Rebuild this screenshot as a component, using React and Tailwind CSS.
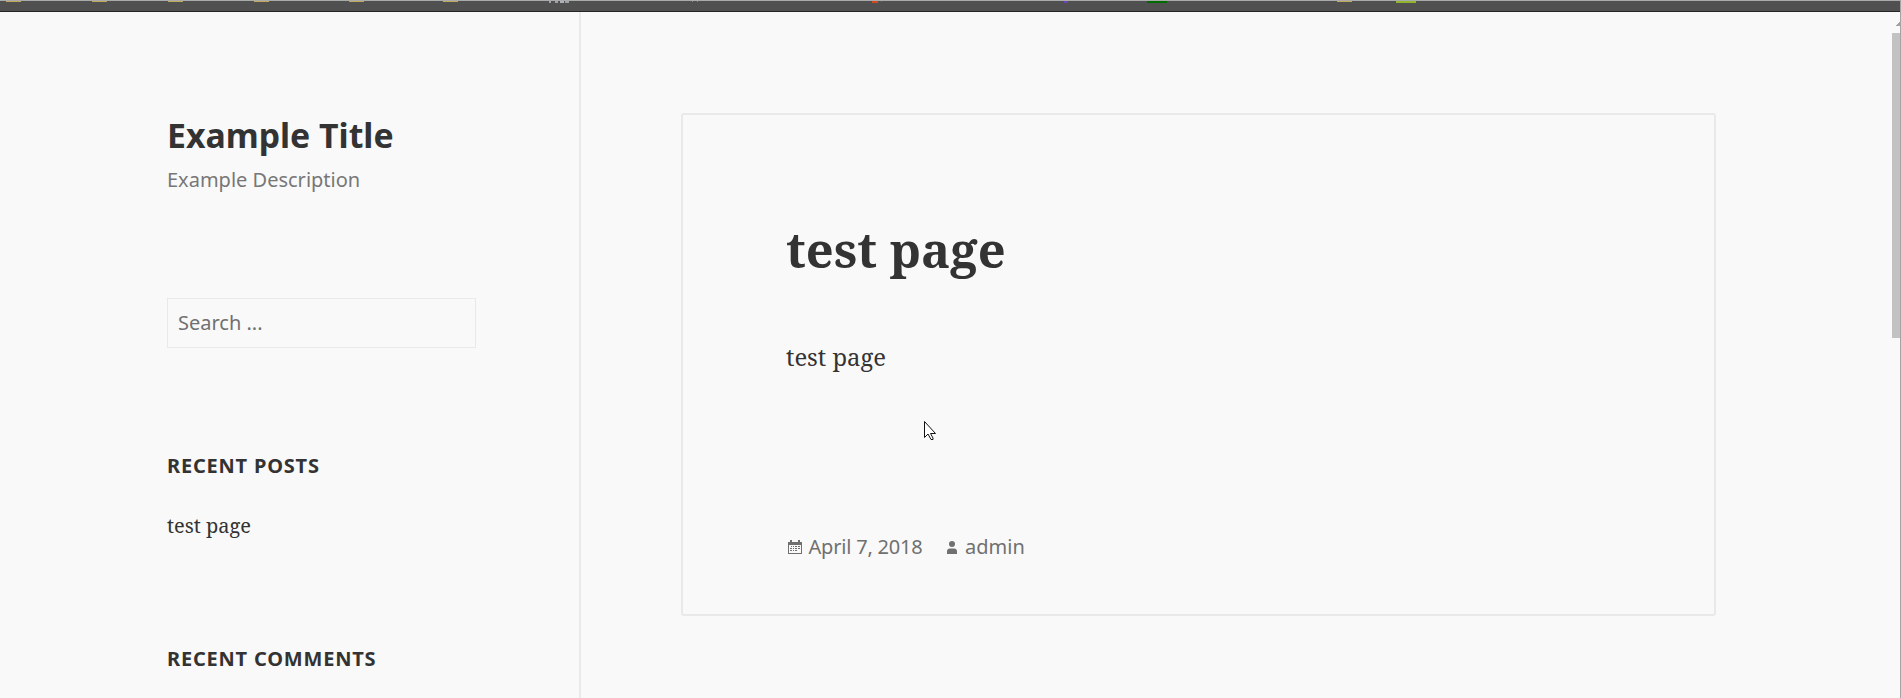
const marks = [
  'left-[6px] w-[15px] h-px bg-[#c2a95a]',
  'left-[92px] w-[15px] h-px bg-[#c2a95a]',
  'left-[168px] w-[15px] h-px bg-[#c2a95a]',
  'left-[254px] w-[15px] h-px bg-[#c2a95a]',
  'left-[349px] w-[15px] h-px bg-[#c2a95a]',
  'left-[443px] w-[15px] h-px bg-[#c2a95a]',
  'left-[549px] w-[2px] h-[2px] bg-[#a0a0a8]',
  'left-[555px] w-[3px] h-[2px] bg-[#a0a0a8]',
  'left-[560px] w-[4px] h-[2px] bg-[#b0b0b8]',
  'left-[565px] w-[4px] h-[2px] bg-[#a0a0a8]',
  'left-[692px] w-px h-px bg-[#8a8a8a]',
  'left-[697px] w-px h-px bg-[#8a8a8a]',
  'left-[872px] w-[6px] h-[2px] bg-[#cf4a1c]',
  'left-[881px] w-[1px] h-px bg-[#a05030]',
  'left-[1064px] w-[4px] h-[2px] bg-[#6a45b0]',
  'left-[1147px] w-[20px] h-[2px] bg-[#006a00]',
  'left-[1337px] w-[15px] h-px bg-[#c2a95a]',
  'left-[1396px] w-[20px] h-[2px] bg-[#93b52c]',
];

function BrowserStrip() {
  return (
    <div className="relative h-3 shrink-0 border-t border-b border-t-[#a9abaa] border-b-[#252525] bg-[#505050]">
      {marks.map((m) => (
        <span key={m} className={`absolute top-0 ${m}`} />
      ))}
    </div>
  );
}

function Sidebar() {
  return (
    <aside className="w-[581px] shrink-0 border-r-2 border-[#e9e9e9] pl-[167px] pr-[103px] pt-[101px]">
      <h1 className="h-[45px] whitespace-nowrap text-[33.8px] font-bold leading-[45px] text-[#333]">Example Title</h1>
      <p className="mt-[8px] h-[28px] text-[20px] leading-[28px] text-[#777]">Example Description</p>
      <div role="search" className="mt-[104px] flex h-[50px] items-center border border-[#e9e9e9] pl-[10px] text-[20px] text-[#707070]">
        Search ...
      </div>
      <h2 className="mt-[104px] h-[28px] whitespace-nowrap text-[20px] font-bold uppercase leading-[28px] tracking-[0.04em] text-[#333]">
        Recent Posts
      </h2>
      <a className="mt-[30px] block h-[32px] font-['Noto_Serif','Droid_Serif',serif] text-[20px] leading-[32px] text-[#333]">test page</a>
      <h2 className="mt-[103px] h-[28px] whitespace-nowrap text-[20px] font-bold uppercase leading-[28px] tracking-[0.04em] text-[#333]">
        Recent Comments
      </h2>
    </aside>
  );
}

function Article() {
  return (
    <article className="mt-[101px] ml-[100px] h-[503px] w-[1035px] rounded-[3px] border-2 border-[#e9e9e9] pl-[103px] pt-[102px]">
      <h1 className="h-[64px] font-['Noto_Serif','Droid_Serif',serif] text-[48.8px] font-bold leading-[64px] text-[#333]">test page</h1>
      <p className="mt-[57px] h-[38px] font-['Noto_Serif','Droid_Serif',serif] text-[23.8px] leading-[38px] text-[#333]">test page</p>
      <footer className="mt-[157px] flex h-[28px] items-center text-[20px] leading-[28px] text-[#707070]">
        <svg className="mr-[5.5px] ml-px" width="16" height="14" viewBox="0 0 16 14" fill="#707070" shapeRendering="crispEdges">
          <path d="M1 2H15V14H1ZM2 5V13H14V5Z" fillRule="evenodd" />
          <path d="M3 0h2v3H3zM11 0h2v3h-2z" />
          <path d="M4 6h1v1H4zM6 6h1v1H6zM8 6h2v1H8zM11 6h2v1h-2zM3 8h2v1H3zM6 8h1v1H6zM8 8h2v1H8zM11 8h2v1h-2zM3 10h2v1H3zM6 10h1v1H6zM8 10h2v1H8z" />
        </svg>
        <span className="tracking-[-0.01em]">April 7, 2018</span>
        <svg className="ml-[23.500px] mr-[7px]" width="12" height="13" viewBox="0 0 12 13" fill="#707070">
          <circle cx="6" cy="3" r="3" />
          <path d="M1 13V10.5Q1 7.5 4 7.5H8Q11 7.5 11 10.5V13Z" />
        </svg>
        <span>admin</span>
      </footer>
    </article>
  );
}

export default function App() {
  return (
    <div className="relative flex h-[698px] w-[1901px] flex-col overflow-hidden bg-[#f9f9f9] font-['Noto_Sans',sans-serif]">
      <BrowserStrip />
      <div className="flex min-h-0 flex-1">
        <Sidebar />
        <main className="flex-1">
          <Article />
        </main>
        <div className="flex w-[9px] shrink-0 flex-col pt-[10px]">
          <svg width="9" height="11" viewBox="0 0 9 11" shapeRendering="crispEdges">
            <path d="M7 0h2v1H7zM6 1h3v1H6zM5 2h4v1H5zM4 3h5v1H4z" fill="#a3a3a3" />
          </svg>
          <div className="h-[305px] bg-[#c2c2c2]" />
        </div>
      </div>
      <div className="absolute right-0 top-0 h-full w-px bg-[#a3a3a3]" />
      <svg className="absolute left-[924px] top-[421px]" width="13" height="20" viewBox="0 0 13 20">
        <path d="M.5.5V16.5L4 13L7 18.5H9V17L6.5 12.500H11.500Z" fill="#fff" stroke="#111" />
      </svg>
    </div>
  );
}
